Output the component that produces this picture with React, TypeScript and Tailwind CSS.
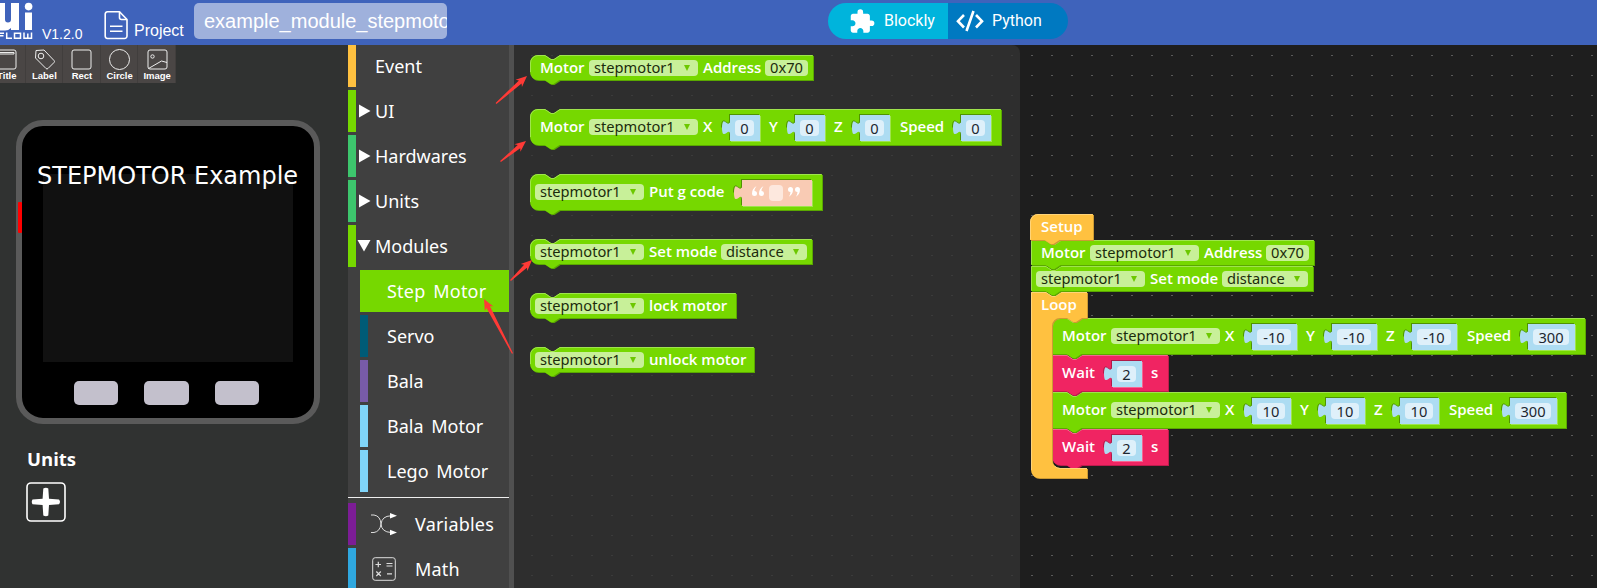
import type { ReactNode } from "react";
import { clsx } from "clsx";

type Tone = "green" | "pink" | "amber";

const TONES: Record<Tone, { main: string; dark: string; light: string }> = {
  green: { main: "#76d800", dark: "#5aa800", light: "#9fe44d" },
  pink: { main: "#f02462", dark: "#bd1c4d", light: "#f56691" },
  amber: { main: "#ffc140", dark: "#cc9a33", light: "#ffd479" },
};

/* ---------- Header ---------- */

function Header() {
  return (
    <header className="relative flex h-[45px] shrink-0 items-start bg-[#3f63bb] text-white">
      <svg className="h-[45px] w-[34px] shrink-0" viewBox="0 0 34 45" fill="#fff">
        <path d="M0 3H5V19.5a3 3 0 0 0 6 0V3H19V30H11V28q-3 3-7 2.5H0z" />
        <circle cx="28.6" cy="6.6" r="3.8" />
        <rect x="25" y="12.5" width="7" height="17.5" />
        <path
          d="M-1 38V33.2H4M-1 35.8H3.5M6.7 32.5V38.2H12M14.5 33.2H20.500V38.200H14.500zM24 32.500V38.200H31.500V32.500M27.800 33.500V38"
          fill="none"
          stroke="#fff"
          strokeWidth="1.500"
        />
      </svg>
      <span className="mt-[25px] ml-[8px] w-[62px] text-[14px] leading-[18px]">V1.2.0</span>
      <svg
        className="mt-[10px] h-[30px] w-[25px] shrink-0"
        viewBox="0 0 25 30"
        fill="none"
        stroke="#fff"
        strokeWidth="1.6"
        strokeLinejoin="round"
      >
        <path d="M3.500 1.800H15.500L23 9.500V26a2.500 2.500 0 0 1-2.500 2.500H3.500A2.500 2.500 0 0 1 1.200 26V4.300A2.500 2.500 0 0 1 3.500 1.800z" />
        <path d="M15.500 1.800V7.500a2 2 0 0 0 2 2H23M6 16.200H18.500M6 21.200H18.500" />
      </svg>
      <span className="mt-[21px] ml-[5px] w-[60px] text-[16px] leading-[20px]">Project</span>
      <div className="mt-[3px] h-[36px] w-[253px] overflow-hidden rounded-[5px] bg-[#9fb1dc] pl-[10px] text-[20px] leading-[36px] whitespace-nowrap">
        example_module_stepmotor
      </div>
      <div className="mt-[3px] ml-[381px] flex h-[36px] w-[240px] overflow-hidden rounded-full font-['Roboto',sans-serif] text-[16px]">
        <div className="flex w-[120px] items-center bg-[#00b4dc] pl-[20px]">
          <svg className="h-[27px] w-[28px] shrink-0" viewBox="0 0 24 24" fill="#fff">
            <path d="M20.500 11H19V7c0-1.100-.9-2-2-2h-4V3.500a2.500 2.500 0 0 0-5 0V5H4c-1.100 0-1.990.9-1.990 2v3.800H3.500c1.490 0 2.700 1.210 2.700 2.700s-1.210 2.700-2.700 2.700H2V20c0 1.100.9 2 2 2h3.800v-1.500c0-1.490 1.210-2.700 2.700-2.700s2.700 1.210 2.700 2.700V22H17c1.100 0 2-.9 2-2v-4h1.500a2.500 2.500 0 0 0 0-5z" />
          </svg>
          <span className="ml-[8px]">Blockly</span>
        </div>
        <div className="flex w-[120px] items-center bg-[#0079c1] pl-[8px]">
          <svg
            className="h-[22px] w-[28px] shrink-0"
            viewBox="0 0 28 22"
            fill="none"
            stroke="#fff"
            strokeWidth="2.600"
          >
            <path d="M8 5L2 11.200L8 17.500M20 5L26 11.200L20 17.500M17.500 1L10.500 21" />
          </svg>
          <span className="ml-[8px]">Python</span>
        </div>
      </div>
    </header>
  );
}

/* ---------- Left panel ---------- */

const TOOLS: { name: string; icon: ReactNode }[] = [
  {
    name: "Title",
    icon: (
      <>
        <rect x="1" y="1" width="19" height="19" rx="2" />
        <path d="M3 3.500H18V5H3" />
      </>
    ),
  },
  {
    name: "Label",
    icon: (
      <>
        <path d="M2 1.500L10 1L20 11.500Q21 12.500 20 13.500L14 19.500Q13 20.500 12 19.500L1.500 9z" />
        <circle cx="7" cy="7" r="2.800" />
      </>
    ),
  },
  { name: "Rect", icon: <rect x="1" y="1" width="19" height="19" rx="2" /> },
  { name: "Circle", icon: <circle cx="10.500" cy="10.500" r="10" /> },
  {
    name: "Image",
    icon: (
      <>
        <rect x="1" y="1" width="19" height="19" rx="2" />
        <circle cx="5.500" cy="7.500" r="1.700" />
        <path d="M1.500 19.500L14.500 12L20 13.500" />
      </>
    ),
  },
];

function LeftPanel() {
  return (
    <section className="flex w-[348px] shrink-0 flex-col bg-[#303231] text-white">
      <div className="-ml-[12px] flex h-[38px] w-[188px] bg-[#4a4645]">
        {TOOLS.map((t) => (
          <div
            key={t.name}
            className="flex w-[37.600px] shrink-0 flex-col items-center border-r border-[#413e3d] pt-[4px] pl-[1px]"
          >
            <svg
              className="h-[21px] w-[21px] overflow-visible"
              viewBox="0 0 21 21"
              fill="none"
              stroke="#eee"
              strokeWidth="1"
            >
              {t.icon}
            </svg>
            <span className="text-[9.500px] leading-[12px] font-bold">{t.name}</span>
          </div>
        ))}
      </div>

      <div className="relative mt-[37px] ml-[16px] flex h-[304px] w-[304px] flex-col items-center rounded-[27px] border-6 border-[#5a5a5a] bg-black">
        <div className="mt-[48px] h-[188px] w-[250px] bg-[#111111]" />
        <div className="mt-[19px] -ml-[3px] flex gap-[26px]">
          <div className="h-[24px] w-[44.500px] rounded-[5px] bg-[#c3c0cc]" />
          <div className="h-[24px] w-[44.500px] rounded-[5px] bg-[#c3c0cc]" />
          <div className="h-[24px] w-[44.500px] rounded-[5px] bg-[#c3c0cc]" />
        </div>
        <div className="absolute top-[36px] left-[15px] font-['DejaVu_Sans',sans-serif] text-[24px] leading-[28px] whitespace-nowrap">
          STEPMOTOR Example
        </div>
        <div className="absolute top-[76px] -left-[4px] h-[31px] w-[4px] rounded-[1px] bg-[#ff0000]" />
      </div>

      <h2 className="mt-[23px] ml-[27px] font-['Open_Sans',sans-serif] text-[18.500px] leading-[24px] font-bold">
        Units
      </h2>
      <svg className="mt-[11px] ml-[26px] h-[40px] w-[40px]" viewBox="0 0 40 40" fill="none">
        <rect x="1" y="1" width="38" height="38" rx="4" stroke="#fff" strokeWidth="1.600" />
        <path
          d="M17.300 6.500Q20 5 22.300 6.500L23 16.700L33 17.400Q35 19.800 33 22.300L23 23L22.300 33.500Q20 35 17.300 33.500L16.600 23L6.500 22.300Q5 19.800 6.500 17.400L16.600 16.700z"
          fill="#fff"
        />
      </svg>
    </section>
  );
}

/* ---------- Toolbox ---------- */

function Category(props: { name: string; bar: string; mark?: "right" | "down"; nested?: boolean; icon?: ReactNode }) {
  const { name, bar, mark, nested, icon } = props;
  return (
    <div className={clsx("mb-[3px] flex h-[42px] shrink-0 items-center", nested && "ml-[12px]")}>
      <div className={clsx("h-full w-[8px] shrink-0", bar)} />
      <div className={clsx("flex shrink-0 items-center", icon ? "w-[59px] pl-[15px]" : "w-[19px]")}>
        {mark === "right" && (
          <svg className="ml-[3px] h-[14px] w-[12px]" viewBox="0 0 12 14" fill="#fff">
            <path d="M0 .5L11.500 7L0 13.500z" />
          </svg>
        )}
        {mark === "down" && (
          <svg className="ml-[1px] h-[12px] w-[14px]" viewBox="0 0 14 12" fill="#fff">
            <path d="M.5 0H13.500L7 11.500z" />
          </svg>
        )}
        {icon}
      </div>
      <span className={clsx(icon && "tracking-[0.2px]")}>{name}</span>
    </div>
  );
}

function Toolbox() {
  return (
    <nav className="flex h-full w-[166px] shrink-0 flex-col overflow-hidden border-r-5 border-[#505050] bg-[#404040] font-['Noto_Sans',sans-serif] text-[18px] leading-[24px] [word-spacing:3px] text-white">
      <Category name="Event" bar="bg-[#ffc140]" />
      <Category name="UI" bar="bg-[#76d800]" mark="right" />
      <Category name="Hardwares" bar="bg-[#3dc66d]" mark="right" />
      <Category name="Units" bar="bg-[#3dc66d]" mark="right" />
      <Category name="Modules" bar="bg-[#76d800]" mark="down" />
      <div className="mb-[3px] ml-[12px] flex h-[42px] shrink-0 items-center bg-[#76d800] pl-[27px] tracking-[0.2px]">
        Step Motor
      </div>
      <Category name="Servo" bar="bg-[#005b76]" nested />
      <Category name="Bala" bar="bg-[#785ba8]" nested />
      <Category name="Bala Motor" bar="bg-[#80d4f8]" nested />
      <Category name="Lego Motor" bar="bg-[#80d4f8]" nested />
      <div className="mt-[2px] mb-[5px] h-px shrink-0 bg-[#eeeeee]" />
      <Category
        name="Variables"
        bar="bg-[#7c1d96]"
        icon={
          <svg className="h-[24px] w-[26px]" viewBox="0 0 26 24" fill="none" stroke="#ddd" strokeWidth="1">
            <path d="M0 3H3Q9.500 4 10 12Q10.500 20 20 20.500M0 20.500H3Q9 19.500 10 12Q11 4 20 3.800" />
            <path d="M19 1L26 3.800L19 6.500zM19 17.700L26 20.500L19 23.200z" fill="#fff" stroke="none" />
          </svg>
        }
      />
      <Category
        name="Math"
        bar="bg-[#2fa8e0]"
        icon={
          <svg className="ml-px h-[24px] w-[24px]" viewBox="0 0 24 24" fill="none" stroke="#ddd" strokeWidth="1">
            <rect x=".7" y=".7" width="22.600" height="22.600" rx="2.500" />
            <path
              d="M3.500 7.500H9M6.300 4.700V10.300M14.500 6.500H20.500M14.500 9H20.500M4.300 14.500L8.800 19M8.800 14.500L4.300 19M15 16.800H20"
              strokeWidth="1.200"
            />
          </svg>
        }
      />
    </nav>
  );
}

/* ---------- Blocks ---------- */

function Block(props: {
  at: string;
  w: number;
  h: number;
  tone?: Tone;
  squareTop?: boolean;
  squareBottom?: boolean;
  hat?: boolean;
  children: ReactNode;
}) {
  const { at, w, h, tone = "green", squareTop, squareBottom, hat, children } = props;
  const c = TONES[tone];
  const start = squareTop ? "M0 0" : "M0 8A8 8 0 0 1 8 0";
  const notch = hat ? "" : "H15l6 4h3l6 -4";
  const end = squareBottom ? "H0" : "H8a8 8 0 0 1 -8 -8";
  const outline = `${start}${notch}H${w}V${h}H29.5l-6 4h-3l-6 -4${end}z`;
  const shine = `M.5 ${squareBottom ? h - 0.5 : h - 8}${
    squareTop ? "V.5" : "V8A7.5 7.5 0 0 1 8 .5"
  }${notch}H${w - 0.5}`;
  return (
    <div className={clsx("absolute", at)}>
      <svg className="absolute top-0 left-0 overflow-visible" width={w} height={h}>
        <path d={outline} fill={c.dark} transform="translate(1 1)" />
        <path d={outline} fill={c.main} />
        <path d={shine} fill="none" stroke={c.light} strokeWidth="1" />
      </svg>
      <div className="relative flex items-start">{children}</div>
    </div>
  );
}

function Label({ w, tall, children }: { w: string; tall?: boolean; children: string }) {
  return (
    <span
      className={clsx(
        "shrink-0 font-['Open_Sans',sans-serif] text-[15px] leading-[20px] font-semibold whitespace-nowrap text-white",
        tall ? "mt-[7px]" : "mt-[2px]",
        w,
      )}
    >
      {children}
    </span>
  );
}

function Field({ w, tall, arrow, children }: { w: string; tall?: boolean; arrow?: boolean; children: string }) {
  return (
    <span
      className={clsx(
        "flex h-[16px] shrink-0 items-center rounded-[4px] bg-[#c8f099] pl-[5px] whitespace-nowrap text-[#1c2b0c]",
        tall ? "mt-[10px]" : "mt-[5px]",
        w,
      )}
    >
      <span className="-mt-[2px]">{children}</span>
      {arrow && (
        <svg className="mr-[8px] ml-auto h-[6px] w-[6px]" viewBox="0 0 6 6" fill="#6cc800">
          <path d="M0 0H6L3 6z" />
        </svg>
      )}
    </span>
  );
}

function Socket({ w, peach, pink, children }: { w: string; peach?: boolean; pink?: boolean; children: ReactNode }) {
  return (
    <span
      className={clsx(
        "relative mt-[6px] flex h-[26px] shrink-0 items-start",
        peach ? "bg-[#f9cbb4]" : "bg-[#addcf2]",
        pink
          ? "shadow-[-1px_-1px_0_#b01a48,1px_1px_0_#f56691]"
          : "shadow-[-1px_-1px_0_#4f9300,1px_1px_0_#9fe44d]",
        w,
      )}
    >
      <svg className="absolute top-0 -left-[9px] overflow-visible" width="10" height="26">
        <path
          d="M10 5H9c0 10 -8 -8 -8 7.500s8 -2.500 8 7.500H10z"
          fill={peach ? "#f9cbb4" : "#addcf2"}
        />
        <path
          d="M8.500 0V5c0 10 -8 -8 -8 7.500"
          fill="none"
          stroke={pink ? "#b01a48" : "#4f9300"}
          strokeWidth="1"
        />
      </svg>
      {children}
    </span>
  );
}

function Num({ w, pink, children }: { w: string; pink?: boolean; children: string }) {
  return (
    <Socket w={w} pink={pink}>
      <span className="mt-[5px] mr-[6px] ml-[5px] flex h-[16px] grow items-center justify-center rounded-[4px] bg-[#def0fa] text-[#1d2730]">
        <span className="-mt-[1px]">{children}</span>
      </span>
    </Socket>
  );
}

function MotorXYZ(props: {
  at: string;
  w: number;
  values: string[];
  size: string;
  speed: string;
  speedSize: string;
  squareTop?: boolean;
  squareBottom?: boolean;
}) {
  const { values, size, speed, speedSize, ...rest } = props;
  return (
    <Block h={36} {...rest}>
      <Label tall w="ml-[10px] w-[49px]">Motor</Label>
      <Field tall arrow w="w-[109px]">stepmotor1</Field>
      <Label tall w="ml-[5px] w-[27px]">X</Label>
      <Num w={size}>{values[0]}</Num>
      <Label tall w="ml-[9px] w-[26px]">Y</Label>
      <Num w={size}>{values[1]}</Num>
      <Label tall w="ml-[9px] w-[26px]">Z</Label>
      <Num w={size}>{values[2]}</Num>
      <Label tall w="ml-[10px] w-[61px]">Speed</Label>
      <Num w={speedSize}>{speed}</Num>
    </Block>
  );
}

function MotorAddress(props: { at: string; squareTop?: boolean; squareBottom?: boolean }) {
  return (
    <Block w={283} h={25} {...props}>
      <Label w="ml-[10px] w-[49px]">Motor</Label>
      <Field arrow w="w-[109px]">stepmotor1</Field>
      <Label w="ml-[5px] w-[62px]">Address</Label>
      <Field w="w-[43px]">0x70</Field>
    </Block>
  );
}

function SetMode(props: { at: string; squareTop?: boolean; squareBottom?: boolean }) {
  return (
    <Block w={282} h={25} {...props}>
      <Field arrow w="ml-[5px] w-[109px]">stepmotor1</Field>
      <Label w="ml-[5px] w-[72px]">Set mode</Label>
      <Field arrow w="w-[86px]">distance</Field>
    </Block>
  );
}

function Wait({ at, squareBottom }: { at: string; squareBottom?: boolean }) {
  return (
    <Block at={at} w={116} h={36} tone="pink" squareTop squareBottom={squareBottom}>
      <Label tall w="ml-[10px] w-[50px]">Wait</Label>
      <Num pink w="w-[30px]">2</Num>
      <Label tall w="ml-[9px] w-[10px]">s</Label>
    </Block>
  );
}

function Loop() {
  const c = TONES.amber;
  const shape = "M0 0H15l6 4h3l6 -4H56V26H51l-6 4h-3l-6 -4H29a8 8 0 0 0 -8 8V168a8 8 0 0 0 8 8H56V186H8a8 8 0 0 1 -8 -8z";
  return (
    <div className="absolute top-[247px] left-[517px]">
      <svg className="absolute top-0 left-0 overflow-visible" width="57" height="188">
        <path d={shape} fill={c.dark} transform="translate(1 1)" />
        <path d={shape} fill={c.main} />
        <path d="M.5 178V.5H15l6 4h3l6 -4H56M23.500 174a8 8 0 0 0 5.500 2.500H56" fill="none" stroke={c.light} />
      </svg>
      <div className="relative flex">
        <Label w="ml-[10px] w-[40px]">Loop</Label>
      </div>
    </div>
  );
}

function Grid({ id, color }: { id: string; color: string }) {
  return (
    <svg className="absolute inset-0 h-full w-full">
      <pattern id={id} width="20" height="20" patternUnits="userSpaceOnUse">
        <rect x="17" y="10" width="2" height="1" fill={color} />
      </pattern>
      <rect width="100%" height="100%" fill={`url(#${id})`} />
    </svg>
  );
}

/* ---------- Annotation arrows ---------- */

const ARROWS = [
  [496, 103.5, 527, 76],
  [500.5, 161.5, 526, 141],
  [510.5, 280.5, 532, 260],
  [512.5, 353.5, 484, 299],
];

function arrowPoints([x1, y1, x2, y2]: number[]) {
  const len = Math.hypot(x2 - x1, y2 - y1);
  const ux = (x2 - x1) / len;
  const uy = (y2 - y1) / len;
  const p = (along: number, side: number) =>
    `${x1 + ux * along - uy * side},${y1 + uy * along + ux * side}`;
  return [
    p(0, 0.6),
    p(len - 9, 2),
    p(len - 11, 4.8),
    p(len, 0),
    p(len - 11, -4.8),
    p(len - 9, -2),
    p(0, -0.6),
  ].join(" ");
}

export default function App() {
  return (
    <div className="relative flex h-[588px] w-[1597px] flex-col overflow-hidden bg-[#1e1e1e] font-['Liberation_Sans',sans-serif]">
      <Header />
      <main className="flex min-h-0 grow">
        <LeftPanel />
        <Toolbox />
        <div className="relative grow overflow-hidden bg-[#1e1e1e] font-['Noto_Sans',sans-serif] text-[14.670px] leading-[16px]">
          <Grid id="grid" color="#5a5a5a" />
          <div className="relative h-full w-[506px] rounded-tr-[8px] bg-[#2e2e2e]">
            <Grid id="flyout-grid" color="#3b3b3b" />
            <MotorAddress at="top-[10px] left-[16px]" />
            <MotorXYZ
              at="top-[64px] left-[16px]"
              w={471}
              values={["0", "0", "0"]}
              size="w-[30px]"
              speed="0"
              speedSize="w-[30px]"
            />
            <Block at="top-[129px] left-[16px]" w={292} h={36}>
              <Field tall arrow w="ml-[5px] w-[109px]">stepmotor1</Field>
              <Label tall w="ml-[5px] w-[93px]">Put g code</Label>
              <Socket peach w="w-[70px]">
                <svg className="mt-[6px] ml-[10px] h-[11px] w-[12px]" viewBox="0 0 12 11" fill="#fff">
                  <path d="M4.500 0Q0 2.500 0 7.500A2.500 2.500 0 1 0 2.500 5Q2.500 2.500 4.500 0zM11.500 0Q7 2.500 7 7.500A2.500 2.500 0 1 0 9.500 5Q9.500 2.500 11.500 0z" />
                </svg>
                <span className="mt-[5px] ml-[5px] h-[16px] w-[14px] rounded-[4px] bg-[#fde8de]" />
                <svg className="mt-[6px] ml-[5px] h-[11px] w-[12px] rotate-180" viewBox="0 0 12 11" fill="#fff">
                  <path d="M4.500 0Q0 2.500 0 7.500A2.500 2.500 0 1 0 2.500 5Q2.500 2.500 4.500 0zM11.500 0Q7 2.500 7 7.500A2.500 2.500 0 1 0 9.500 5Q9.500 2.500 11.500 0z" />
                </svg>
              </Socket>
            </Block>
            <SetMode at="top-[194px] left-[16px]" />
            <Block at="top-[248px] left-[16px]" w={206} h={25}>
              <Field arrow w="ml-[5px] w-[109px]">stepmotor1</Field>
              <Label w="ml-[5px] w-[80px]">lock motor</Label>
            </Block>
            <Block at="top-[302px] left-[16px]" w={224} h={25}>
              <Field arrow w="ml-[5px] w-[109px]">stepmotor1</Field>
              <Label w="ml-[5px] w-[100px]">unlock motor</Label>
            </Block>
          </div>

          <Wait at="top-[384px] left-[538px]" />
          <MotorXYZ
            at="top-[347px] left-[538px]"
            w={514}
            squareTop
            squareBottom
            values={["10", "10", "10"]}
            size="w-[39px]"
            speed="300"
            speedSize="w-[47px]"
          />
          <Wait at="top-[310px] left-[538px]" squareBottom />
          <MotorXYZ
            at="top-[273px] left-[538px]"
            w={533}
            squareBottom
            values={["-10", "-10", "-10"]}
            size="w-[45px]"
            speed="300"
            speedSize="w-[47px]"
          />
          <Loop />
          <SetMode at="top-[221px] left-[517px]" squareTop squareBottom />
          <MotorAddress at="top-[195px] left-[517px]" squareTop squareBottom />
          <Block at="top-[169px] left-[516px]" w={63} h={26} tone="amber" hat squareBottom>
            <Label w="ml-[11px] w-[50px]">Setup</Label>
          </Block>
        </div>
      </main>
      <svg className="pointer-events-none absolute inset-0 h-full w-full" fill="#ff3a36">
        {ARROWS.map((a) => (
          <polygon key={a.join()} points={arrowPoints(a)} />
        ))}
      </svg>
    </div>
  );
}
